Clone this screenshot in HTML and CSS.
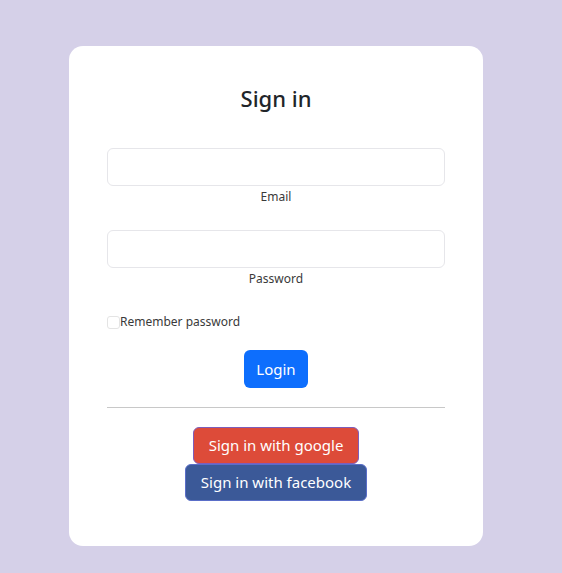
FILE: index.html
```html
<!DOCTYPE html>
<html lang="en">
<head>
  <meta charset="UTF-8" />
  <meta name="viewport" content="width=device-width, initial-scale=1.0"/>
  <title>Sign in</title>

  <link rel="stylesheet" href="styles.css">
</head>
<body>
  <div class="card">
    <h1 class="title">Sign in</h1>

    <form class="login-form">
      <div class="field">
        <input type="email" id="email" class="input">
        <label for="email">Email</label>
      </div>
      <div class="field">
        <input type="password" id="password" class="input">
        <label for="password">Password</label>
      </div>

      <div class="remember">
        <input type="checkbox" id="remember">
        <label for="remember">Remember password</label>
      </div>

      <button type="submit" class="btn btn-login">Login</button>
    </form>

    <hr class="divider">

    <div class="social">
      <button class="btn btn-google">Sign in with google</button>
      <button class="btn btn-facebook">Sign in with facebook</button>
    </div>
  </div>
</body>
</html>
```

FILE: styles.css
```css
* {
  box-sizing: border-box;
  margin: 0;
  padding: 0;
}

body {
  background-color: #d5d0e8;
  font-family: 'Segoe UI', 'Noto Sans', sans-serif;
  color: #212529;
  min-height: 573px;
  padding: 46px 0 0 69px;
}

.card {
  background-color: #fff;
  width: 414px;
  height: 500px;
  border-radius: 14px;
  padding: 37px 38px 0;
}

.title {
  text-align: center;
  font-size: 22px;
  font-weight: 500;
  line-height: 30px;
}

.login-form {
  display: flex;
  flex-direction: column;
  margin-top: 35px;
}

.field {
  display: flex;
  flex-direction: column;
  align-items: center;
  margin-bottom: 24px;
}

.field label {
  font-size: 12px;
  line-height: 19px;
  margin-top: 1px;
  color: #3a3a3a;
}

.input {
  width: 100%;
  height: 38px;
  border: 1px solid #e6e6ea;
  border-radius: 6px;
  background: #fff;
}

.remember {
  display: flex;
  align-items: center;
  font-size: 12px;
  line-height: 20px;
  color: #3a3a3a;
}

.remember input {
  appearance: none;
  width: 13px;
  height: 13px;
  border: 1px solid #e4e4e4;
  border-radius: 3px;
  margin: 0;
}

.btn {
  border: 1px solid transparent;
  border-radius: 6px;
  font-family: inherit;
  font-size: 15px;
  line-height: 24px;
  padding: 6px 12px;
  color: #fff;
  cursor: pointer;
}

.btn-login {
  align-self: center;
  background-color: #0d6efd;
  margin-top: 18px;
  padding: 6px 11px;
}

.divider {
  border: none;
  border-top: 1px solid #c8c8c8;
  margin-top: 19px;
}

.social {
  display: flex;
  flex-direction: column;
  align-items: center;
  margin-top: 19px;
}

.btn-google {
  background-color: #dd4b39;
  border-color: #7e5dba;
  line-height: 25px;
  padding: 5px 15px;
}

.btn-facebook {
  background-color: #3b5998;
  border-color: #5a6ec8;
  line-height: 25px;
  padding: 5px 15px;
}
```
